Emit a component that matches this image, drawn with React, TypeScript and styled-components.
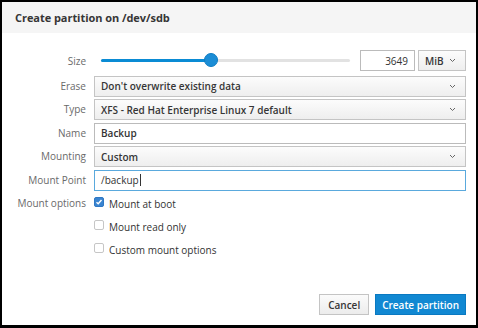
import styled, { createGlobalStyle } from "styled-components";

const GlobalStyle = createGlobalStyle`
  html, body {
    margin: 0;
    padding: 0;
    background: #000;
  }
  body {
    font-family: "Open Sans", "Liberation Sans", sans-serif;
    color: #333;
  }
`;

const Frame = styled.div`
  width: 478px;
  height: 328px;
  box-sizing: border-box;
  padding: 2px 2px 3px 2px;
  background: #000;
`;

const Dialog = styled.div`
  height: 100%;
  background: #fff;
  display: flex;
  flex-direction: column;
`;

const Header = styled.div`
  height: 31px;
  flex: none;
  background: #f5f5f5;
  display: flex;
  align-items: center;
  padding-left: 13px;
`;

const Title = styled.h1`
  margin: 0;
  font-size: 11px;
  font-weight: 700;
  color: #363636;
  letter-spacing: -0.05px;
`;

const Body = styled.div`
  flex: 1;
  display: grid;
  grid-template-columns: 74px 1fr;
  column-gap: 8px;
  row-gap: 2.5px;
  align-content: start;
  padding: 17px 10px 0 10px;
`;

const Label = styled.label<{ $top?: boolean }>`
  font-size: 10px;
  color: #6a6a6a;
  text-align: right;
  line-height: 21px;
  align-self: ${(p) => (p.$top ? "start" : "center")};
`;

const SizeRow = styled.div`
  display: flex;
  align-items: center;
  height: 21px;
  margin-bottom: 2px;
`;

const SliderWrap = styled.div`
  flex: 1;
  position: relative;
  height: 21px;
  margin: 0 10px 0 7px;
`;

const Track = styled.div`
  position: absolute;
  left: 0;
  right: 0;
  top: 9px;
  height: 3px;
  background: #e2e2e2;
  border-radius: 2px;
`;

const Fill = styled.div`
  position: absolute;
  left: 0;
  top: 9px;
  height: 3px;
  background: #0a8bd4;
  border-radius: 2px;
`;

const Thumb = styled.div`
  position: absolute;
  top: 3px;
  width: 14px;
  height: 14px;
  margin-left: -7px;
  border-radius: 50%;
  background: #1b8dd6;
  border: 1px solid #0f7cc2;
  box-sizing: border-box;
`;

const TextInput = styled.div<{ $focus?: boolean; $w?: number; $align?: string; $bold?: boolean }>`
  box-sizing: border-box;
  height: 21px;
  ${(p) => (p.$w ? `width: ${p.$w}px;` : "")}
  border: 1px solid ${(p) => (p.$focus ? "#5aa9dd" : "#bbbbbb")};
  background: #fff;
  display: flex;
  align-items: center;
  justify-content: ${(p) => (p.$align === "right" ? "flex-end" : "flex-start")};
  padding: 0 6px;
  font-size: 10px;
  font-weight: ${(p) => (p.$bold ? 600 : 400)};
  color: #333;
`;

const Caret = styled.span`
  display: inline-block;
  width: 1px;
  height: 12px;
  background: #333;
  margin-left: 1px;
`;

const Select = styled.div<{ $w?: number }>`
  box-sizing: border-box;
  height: 21px;
  ${(p) => (p.$w ? `width: ${p.$w}px; margin-left: 3px;` : "")}
  border: 1px solid #c4c4c4;
  background: linear-gradient(#fcfcfc, #eeeeee);
  display: flex;
  align-items: center;
  justify-content: space-between;
  padding: 0 9px 0 6px;
  font-size: 10px;
  font-weight: 600;
  color: #363636;
`;

const Checks = styled.div`
  display: flex;
  flex-direction: column;
  gap: 8px;
  padding-top: 3px;
`;

const CheckRow = styled.div`
  display: flex;
  align-items: center;
  gap: 5px;
  height: 15px;
  font-size: 10px;
  color: #333;
`;

const Box = styled.span<{ $on?: boolean }>`
  box-sizing: border-box;
  width: 10px;
  height: 10px;
  border-radius: 2px;
  border: 1px solid ${(p) => (p.$on ? "#2f78c4" : "#c6c6c6")};
  background: ${(p) => (p.$on ? "#3a84d0" : "#fff")};
  display: flex;
  align-items: center;
  justify-content: center;
  margin-top: -3px;
`;

const OptionsLabel = styled(Label)`
  line-height: 15px;
  padding-top: 3px;
`;

const Footer = styled.div`
  display: flex;
  justify-content: flex-end;
  gap: 6px;
  padding: 0 10px 10px 0;
`;

const Button = styled.button<{ $primary?: boolean }>`
  height: 21px;
  box-sizing: border-box;
  padding: 0 ${(p) => (p.$primary ? 6 : 8)}px;
  font-family: inherit;
  font-size: 10px;
  font-weight: 600;
  border: 1px solid ${(p) => (p.$primary ? "#0a79c1" : "#c4c4c4")};
  background: ${(p) => (p.$primary ? "#1188d2" : "linear-gradient(#fbfbfb, #ececec)")};
  color: ${(p) => (p.$primary ? "#fff" : "#363636")};
`;

function Chevron() {
  return (
    <svg width="7" height="5" viewBox="0 0 7 5">
      <path d="M1 1 L3.5 3.5 L6 1" fill="none" stroke="#666" strokeWidth="1" />
    </svg>
  );
}

function Check() {
  return (
    <svg width="8" height="8" viewBox="0 0 8 8">
      <path d="M1.5 4.2 L3.2 5.8 L6.5 2" fill="none" stroke="#fff" strokeWidth="1.4" />
    </svg>
  );
}

export default function App() {
  const size = 0.44;
  return (
    <Frame>
      <GlobalStyle />
      <Dialog>
        <Header>
          <Title>Create partition on /dev/sdb</Title>
        </Header>
        <Body>
          <Label>Size</Label>
          <SizeRow>
            <SliderWrap>
              <Track />
              <Fill style={{ width: `${size * 100}%` }} />
              <Thumb style={{ left: `${size * 100}%` }} />
            </SliderWrap>
            <TextInput $w={55} $align="right">3649</TextInput>
            <Select $w={48}>
              MiB <Chevron />
            </Select>
          </SizeRow>

          <Label>Erase</Label>
          <Select>
            Don't overwrite existing data <Chevron />
          </Select>

          <Label>Type</Label>
          <Select>
            XFS - Red Hat Enterprise Linux 7 default <Chevron />
          </Select>

          <Label>Name</Label>
          <TextInput $bold>Backup</TextInput>

          <Label>Mounting</Label>
          <Select>
            Custom <Chevron />
          </Select>

          <Label>Mount Point</Label>
          <TextInput $focus>
            /backup
            <Caret />
          </TextInput>

          <OptionsLabel $top>Mount options</OptionsLabel>
          <Checks>
            <CheckRow>
              <Box $on>
                <Check />
              </Box>
              Mount at boot
            </CheckRow>
            <CheckRow>
              <Box />
              Mount read only
            </CheckRow>
            <CheckRow>
              <Box />
              Custom mount options
            </CheckRow>
          </Checks>
        </Body>
        <Footer>
          <Button>Cancel</Button>
          <Button $primary>Create partition</Button>
        </Footer>
      </Dialog>
    </Frame>
  );
}
